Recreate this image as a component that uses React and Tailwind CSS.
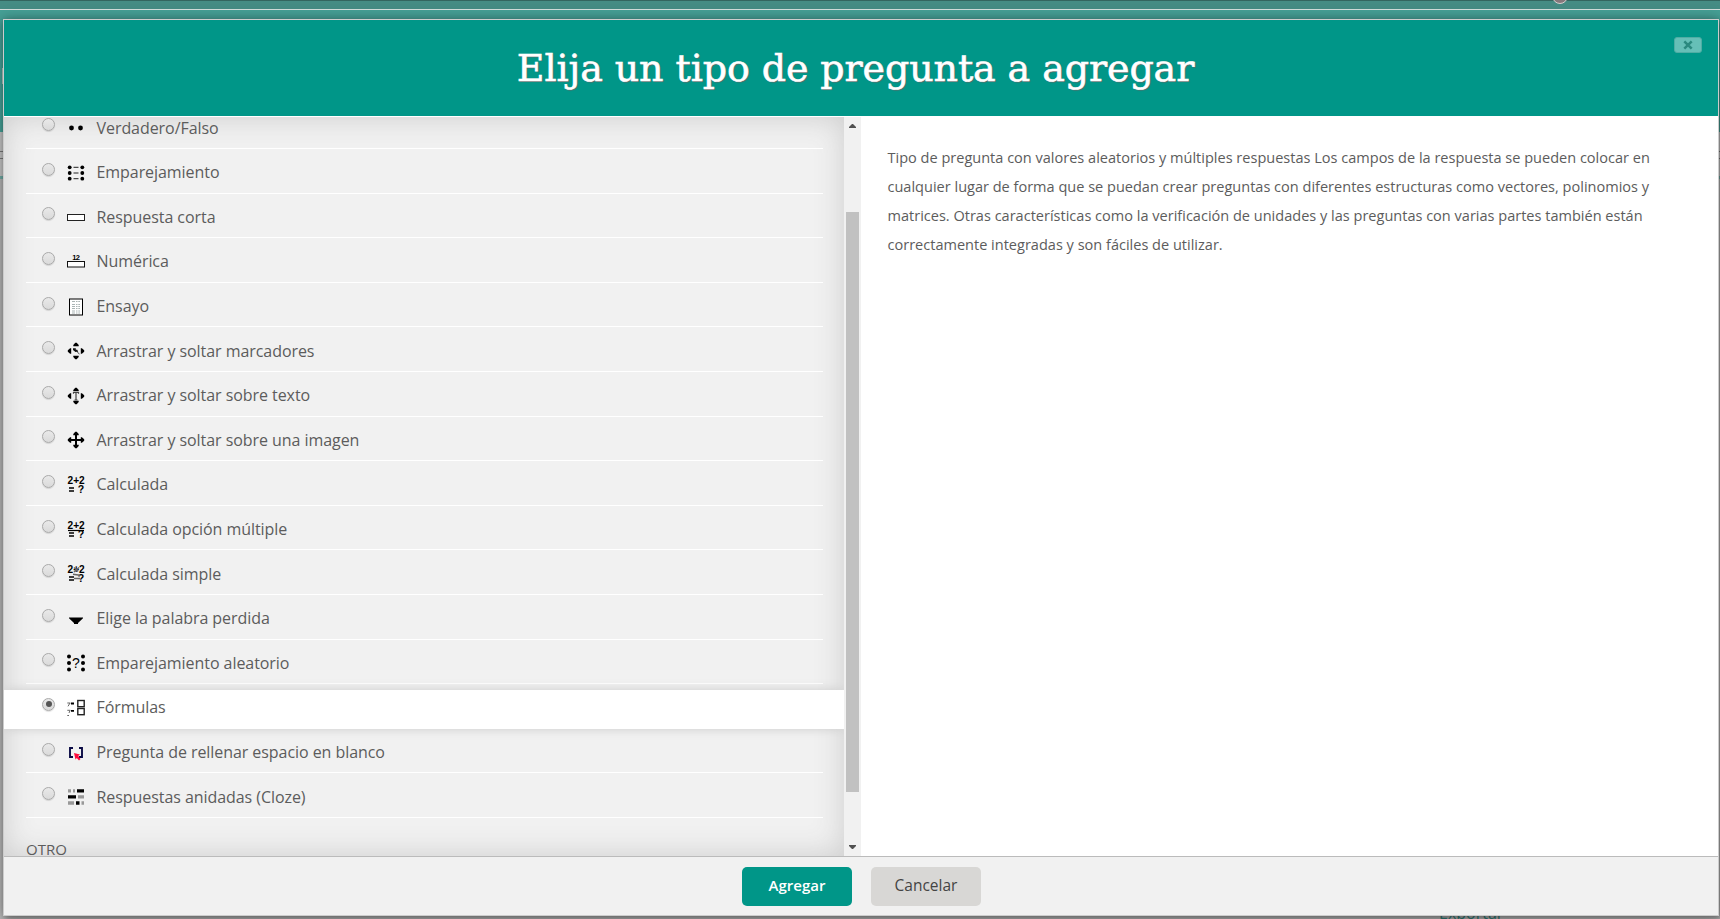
import React from 'react';

const Digits = ({ children }) => (
  <g fontFamily="Liberation Sans" fontWeight="700" fill="#000">{children}</g>
);

const arrowHeads = (
  <path d="M8.300 .8h1.400l2 2.300v1.100H6.300V3.100zM8.300 17.200h1.400l2-2.300v-1.100H6.300v1.100zM.8 8.300v1.400l2.300 2h1.100V6.300H3.100zM17.200 8.300v1.400l-2.300 2h-1.100V6.300h1.100z" />
);

const sum = (
  <Digits>
    <text x="0.5" y="7.800" fontSize="10" textLength="17.200" lengthAdjust="spacingAndGlyphs">2+2</text>
    <text x="10.700" y="17.300" fontSize="10.500">?</text>
    <path d="M2 11.200h5v1.500H2zM2 14.200h5v1.500H2z" />
  </Digits>
);

const icons = {
  truefalse: (
    <g><circle cx="4.500" cy="9" r="2.400" /><circle cx="13.500" cy="9" r="2.400" /></g>
  ),
  match: (
    <g>
      {[3.3, 9, 14.7].map((y) => (
        <g key={y}>
          <circle cx="2.700" cy={y} r="1.900" /><circle cx="15.300" cy={y} r="1.900" />
          <path d={`M6.5 ${y}h5`} stroke="#222" strokeWidth="1" />
        </g>
      ))}
    </g>
  ),
  short: <rect x="0.500" y="6.500" width="17" height="6" fill="#fff" stroke="#222" />,
  numeric: (
    <g>
      <Digits><text x="5.300" y="6.500" fontSize="7.500" textLength="7.500">12</text></Digits>
      <rect x="0.500" y="8.500" width="17" height="5.500" fill="#fff" stroke="#111" />
    </g>
  ),
  essay: (
    <g>
      <rect x="2.500" y="1" width="13" height="16" fill="#fff" stroke="#000" />
      <path d="M5 3.500h8M5 6.500h8M5 8.500h8M5 10.500h8M5 13h8M5 15h8" stroke="#aab4b4" strokeWidth="1" strokeDasharray="3 1 1.500 .8" />
    </g>
  ),
  marker: (
    <g>{arrowHeads}<path d="M6 6.300h2.800v1.500h1.500l.9 2.200L8.500 10 6 8z" fill="#111" /><path d="M9.500 9l3 3.300" stroke="#555" strokeWidth="1" /></g>
  ),
  ddtext: (
    <g>{arrowHeads}<path d="M6.500 6.800V5.500h5v1.300M9 5v8.500M7.500 13h3" stroke="#444" fill="none" strokeWidth="1.200" /></g>
  ),
  ddimage: (
    <g>{arrowHeads}<path d="M8 3h2v5h5v2h-5v5H8v-5H3V8h5z" /></g>
  ),
  calc: sum,
  calcmulti: <g>{sum}<path d="M1 9.500h16" stroke="#000" strokeWidth="1.200" /></g>,
  calcsimple: (
    <g>{sum}<path d="M7 2.500l4 4M12 2.500L7 7M6 9.200l7 1M7 13.500h6" stroke="#666" strokeWidth="1.600" /></g>
  ),
  missing: <path d="M2 7.500h14v.8L11 13v1H7v-1L2 8.300z" />,
  random: (
    <g>
      {[2.5, 9, 15.5].map((y) => (
        <g key={y}><circle cx="2" cy={y} r="2" /><circle cx="16" cy={y} r="2" /></g>
      ))}
      <text x="5.100" y="14" fontSize="14" fontFamily="Liberation Sans">?</text>
    </g>
  ),
  formulas: (
    <g>
      <rect x="10.800" y="1.500" width="6.400" height="6.200" fill="#fff" stroke="#222" strokeWidth="1.400" />
      <rect x="10.800" y="9.500" width="6.400" height="6.200" fill="#fff" stroke="#222" strokeWidth="1.400" />
      <path d="M4 4.500h3M4 11.800h3" stroke="#000" strokeWidth="1.800" />
      <path d="M.3 4h3M1 7.300L3 4M.3 11.300h3M2 14l1-2.500M.3 16.500H2" stroke="#666" strokeWidth="1" />
    </g>
  ),
  gapfill: (
    <g>
      <path d="M6 4H3v9h3M12 4h3v9h-3" fill="none" stroke="#0b0b45" strokeWidth="1.900" />
      <path d="M7 9l6 1.500-1.800 1.500L13.500 15 12 16.500 9.800 14 8.500 15.500z" fill="#ff0a3c" />
    </g>
  ),
  cloze: (
    <g>
      <path d="M10 1.300h7v3.200h-7zM1 7.300h8v3.200H1zM9 13.300h3.500v3.400H9z" />
      <path d="M1 1.300h3v3.200H1zM6 1.300h2v3.200H6zM11 7.300h6v3.200h-6zM1 13.300h6v3.400H1zM14.500 13.300h2.500v3.400h-2.500z" fill="#999" />
    </g>
  ),
};

const rows = [
  ['truefalse', 'Verdadero/Falso'],
  ['match', 'Emparejamiento'],
  ['short', 'Respuesta corta'],
  ['numeric', 'Numérica'],
  ['essay', 'Ensayo'],
  ['marker', 'Arrastrar y soltar marcadores'],
  ['ddtext', 'Arrastrar y soltar sobre texto'],
  ['ddimage', 'Arrastrar y soltar sobre una imagen'],
  ['calc', 'Calculada'],
  ['calcmulti', 'Calculada opción múltiple'],
  ['calcsimple', 'Calculada simple'],
  ['missing', 'Elige la palabra perdida'],
  ['random', 'Emparejamiento aleatorio'],
  ['formulas', 'Fórmulas'],
  ['gapfill', 'Pregunta de rellenar espacio en blanco'],
  ['cloze', 'Respuestas anidadas (Cloze)'],
];

function Radio({ checked }) {
  return (
    <span className="mb-[3px] flex size-[13px] shrink-0 items-center justify-center rounded-full border border-[#a9a9a9] bg-gradient-to-b from-[#e9e9e9] to-[#dadada] shadow-[0_1px_1px_rgba(0,0,0,0.12)]">
      {checked && <span className="size-[6px] rounded-full bg-[#555]" />}
    </span>
  );
}

function Row({ icon, label }) {
  const selected = icon === 'formulas';
  const content = (
    <>
      <Radio checked={selected} />
      <svg viewBox="0 0 18 18" className="mt-[4px] ml-3 size-[18px] shrink-0 overflow-visible">{icons[icon]}</svg>
      <span className="mt-[3px] ml-[11.500px] text-[16px] leading-5 tracking-[-0.060px] whitespace-nowrap">{label}</span>
    </>
  );
  if (selected) {
    return (
      <div className="-mx-[22px] h-[44.6px] pt-[6px]">
        <div className="flex h-[39px] items-center bg-white pb-[8px] pl-[38px] shadow-[0_0_10px_#ccc]">{content}</div>
      </div>
    );
  }
  return <div className="flex h-[44.6px] items-center border-b border-white pl-4">{content}</div>;
}

export default function App() {
  return (
    <div className="relative h-[919px] w-[1720px] overflow-hidden bg-[#b3b3b3] font-['Open_Sans',sans-serif] text-[#5c5c5c]">
      <div className="flex h-full flex-col">
        <div className="flex h-[9px] shrink-0 justify-end border-t border-[#34655f] bg-[#458c84] pr-[152px]">
          <div className="-mt-[13px] size-4 rounded-full border border-[#d8d0d0] bg-[#85777b]" />
        </div>
        <div className="h-[123px] shrink-0 border-t border-[#d3dedc] bg-[#46a096] pt-[58px] pl-[2px]">
          <div className="h-4 w-px bg-[#b5c9c6]" />
        </div>
        <div className="flex h-[44px] shrink-0 justify-between bg-[#c4c4c4] pt-[19px]">
          <div className="h-2 w-[3px] border-y border-[#777]" />
          <div className="h-2 w-px border-y border-[#777]" />
        </div>
        <div className="h-[3px] shrink-0 bg-[#70a9a3]" />
        <div className="grow bg-[#b5b5b5] pt-[724px] pl-[1439px] text-[16px] leading-5 text-[#317d77]">Exportar</div>
      </div>

      <div className="absolute top-[19px] left-[3px] flex h-[897px] w-[1716px] flex-col border border-[#ccc] bg-white shadow-[0_0_12px_rgba(0,0,0,0.35),2px_3px_6px_rgba(0,0,0,0.3)]">
        <header className="relative flex h-24 shrink-0 items-center justify-center bg-[#009688]">
          <h1 className="mr-[11px] text-[38px] leading-none font-normal tracking-[-0.100px] whitespace-nowrap text-white [-webkit-text-stroke:0.600px_white] [font-family:'Roboto_Slab','DejaVu_Serif',serif] [text-shadow:1px_1px_1px_#666]">
            Elija un tipo de pregunta a agregar
          </h1>
          <button className="absolute top-[17px] right-4 flex h-4 w-7 items-center justify-center rounded-[3px] border border-[#4fada4] bg-[#66bfb7]">
            <svg viewBox="0 0 10 10" className="size-[10px]"><path d="M1.300 1.300l7.400 7.400M8.700 1.300l-7.400 7.400" stroke="#2b897f" strokeWidth="2.500" /></svg>
          </button>
        </header>

        <div className="flex h-[740px] shrink-0 border-t border-white">
          <div className="h-full w-[840px] shrink-0 overflow-hidden bg-[#f1f1f1] px-[22px] shadow-[inset_0_0_30px_#ccc]">
            <div className="-mt-[12.600px] w-[797px]">
              {rows.map(([icon, label]) => <Row key={icon} icon={icon} label={label} />)}
              <div className="pt-[21px] text-[15px] leading-5">OTRO</div>
            </div>
          </div>
          <div className="flex w-[17px] shrink-0 flex-col items-center bg-[#f1f1f1]">
            <svg viewBox="0 0 7 4" className="mt-[7px] h-1 w-[7px]"><path d="M3 0h1l3 3v1H0V3z" fill="#505050" /></svg>
            <div className="mt-[84px] h-[580px] w-[13px] bg-[#c1c1c1]" />
            <svg viewBox="0 0 7 4" className="mt-[53px] h-1 w-[7px]"><path d="M0 0h7v1L4 4H3L0 1z" fill="#505050" /></svg>
          </div>
          <p className="pt-[26px] pl-[26.500px] text-[14.540px] leading-[29px] whitespace-nowrap">
            Tipo de pregunta con valores aleatorios y múltiples respuestas Los campos de la respuesta se pueden colocar en<br />
            cualquier lugar de forma que se puedan crear preguntas con diferentes estructuras como vectores, polinomios y<br />
            matrices. Otras características como la verificación de unidades y las preguntas con varias partes también están<br />
            correctamente integradas y son fáciles de utilizar.
          </p>
        </div>

        <footer className="flex grow gap-[19px] border-t border-[#bbb] bg-[#f1f1f1] pt-[10px] pl-[738px]">
          <button className="h-[39px] w-[110px] rounded-[5px] bg-[#009688] pb-[2px] text-[15px] font-semibold text-white">Agregar</button>
          <button className="h-[39px] w-[110px] rounded-[5px] bg-[#d8d7d5] pb-[2px] text-[15.500px] text-[#444]">Cancelar</button>
        </footer>
      </div>
    </div>
  );
}
